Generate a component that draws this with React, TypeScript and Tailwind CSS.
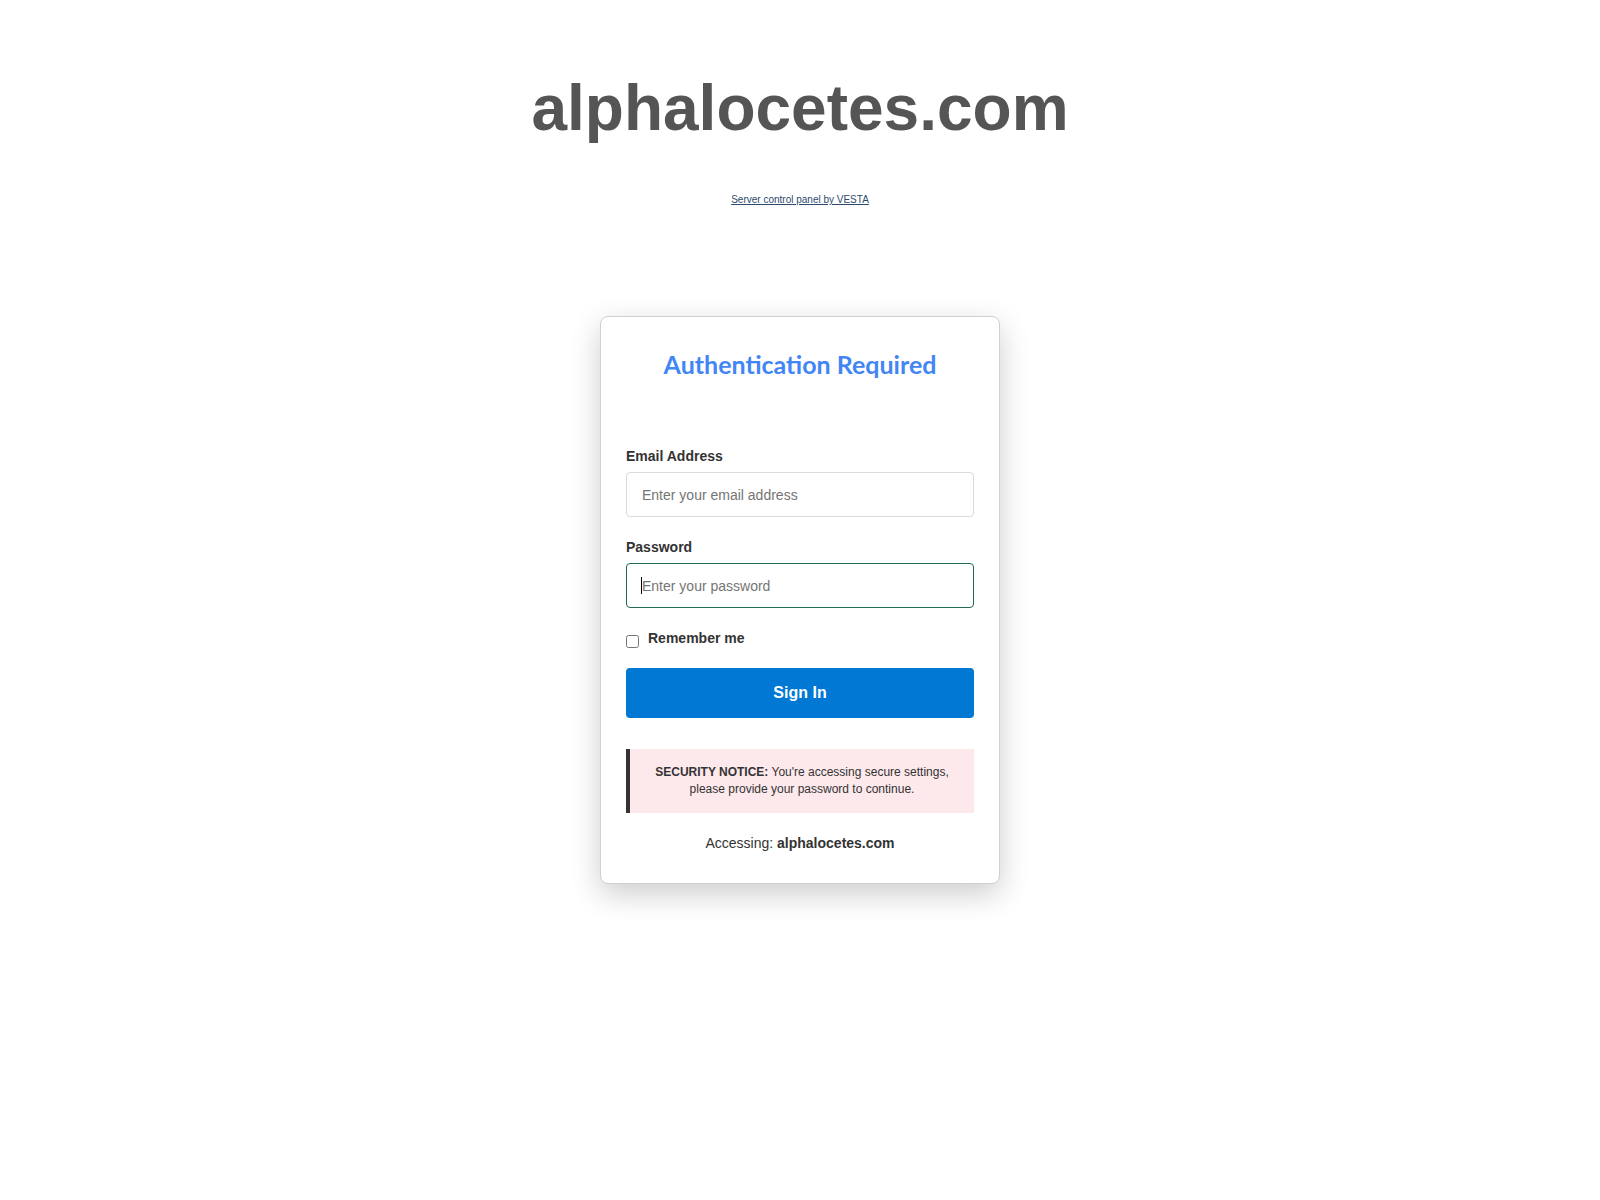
export default function App() {
  return (
    <div className="min-h-screen bg-white font-['Liberation_Sans',Arial,sans-serif] text-[#333]">
      <h1 className="pt-[71px] text-center text-[64px] font-bold leading-[74px] text-[#555]">
        alphalocetes.com
      </h1>
      <div className="mt-[49px] text-center text-[10px] leading-[12px]">
        <a href="#" className="text-[#2c4a6b] underline">
          Server control panel by VESTA
        </a>
      </div>

      <div className="mx-auto mt-[110px] w-[400px] rounded-lg border border-[#d0d0d0] bg-white px-[25px] pt-[32px] pb-[30px] shadow-[0_10px_30px_rgba(0,0,0,0.2)]">
        <h2 className="mb-[68px] text-center font-['Lato',sans-serif] text-[25px] font-bold leading-[31px] text-[#4285f4]">
          Authentication Required
        </h2>

        <div className="mb-[22px]">
          <label className="mb-2 block text-[14px] font-bold leading-[16px] text-[#333]">Email Address</label>
          <input
            type="email"
            placeholder="Enter your email address"
            className="h-[45px] w-full rounded border border-[#dcdcdc] px-[15px] text-[14px] outline-none placeholder:text-[#757575]"
          />
        </div>

        <div>
          <label className="mb-2 block text-[14px] font-bold leading-[16px] text-[#333]">Password</label>
          <div className="relative">
            <input
              type="password"
              placeholder="Enter your password"
              className="h-[45px] w-full rounded border border-[#1f6b58] px-[15px] text-[14px] outline-none placeholder:text-[#757575]"
            />
            <span className="absolute top-[14px] left-[15px] h-[17px] w-px bg-black" />
          </div>
        </div>

        <div className="mt-[22px] flex items-start">
          <input type="checkbox" className="mt-[5px] mr-[9px] h-[13px] w-[13px]" />
          <span className="text-[14px] font-bold leading-[16px] text-[#333]">Remember me</span>
        </div>

        <button className="mt-[20px] h-[50px] w-full rounded bg-[#0078d4] text-[16px] font-bold text-white">
          Sign In
        </button>

        <div className="mt-[31px] border-l-4 border-[#333] bg-[#fde8eb] px-[15px] py-[15px] text-center text-[12px] leading-[17px] text-[#333]">
          <strong>SECURITY NOTICE:</strong> You're accessing secure settings, please provide your password to continue.
        </div>

        <div className="mt-[20px] text-center text-[14px] leading-[20px] text-[#333]">
          Accessing: <strong>alphalocetes.com</strong>
        </div>
      </div>
    </div>
  );
}
